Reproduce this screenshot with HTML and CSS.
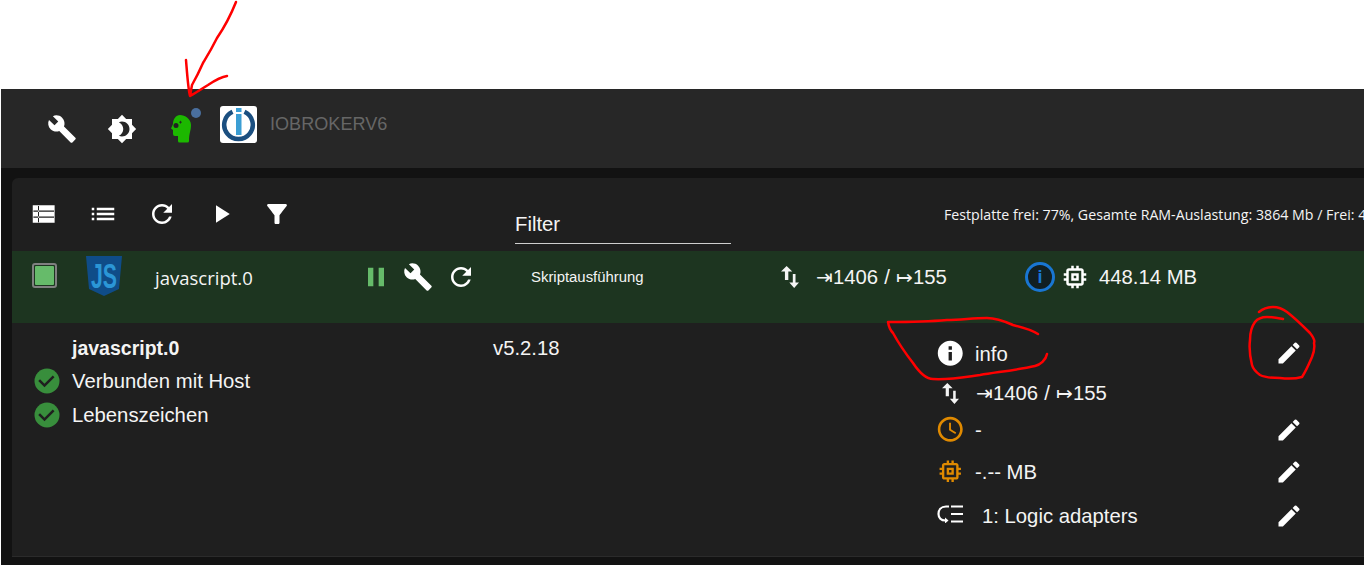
FILE: index.html
```html
<!DOCTYPE html>
<html lang="de">
<head>
<meta charset="utf-8">
<title>ioBroker Instanzen</title>
<link rel="stylesheet" href="styles.css">
</head>
<body>
<svg class="defs" width="0" height="0" aria-hidden="true">
  <symbol id="i-wrench" viewBox="0 0 24 24"><path d="M22.7 19l-9.1-9.1c.9-2.3.4-5-1.5-6.9-2-2-5-2.4-7.4-1.3L9 6 6 9 1.6 4.7C.4 7.1.9 10.1 2.9 12.1c1.9 1.9 4.6 2.4 6.9 1.5l9.1 9.1c.4.4 1 .4 1.4 0l2.3-2.3c.5-.4.5-1.1.1-1.4z"/></symbol>
  <symbol id="i-refresh" viewBox="0 0 24 24"><path d="M17.65 6.35C16.2 4.9 14.21 4 12 4c-4.42 0-7.99 3.58-7.99 8s3.57 8 7.99 8c3.73 0 6.84-2.55 7.73-6h-2.08c-.82 2.33-3.04 4-5.65 4-3.31 0-6-2.69-6-6s2.69-6 6-6c1.66 0 3.14.69 4.22 1.78L13 11h7V4l-2.35 2.35z"/></symbol>
  <symbol id="i-edit" viewBox="0 0 24 24"><path d="M3 17.25V21h3.75L17.81 9.94l-3.75-3.75L3 17.25zM20.71 7.04c.39-.39.39-1.02 0-1.41l-2.34-2.34a.9959.9959 0 0 0-1.41 0l-1.83 1.83 3.75 3.75 1.83-1.83z"/></symbol>
  <symbol id="i-memory" viewBox="0 0 24 24"><path d="M15 9H9v6h6V9zm-2 4h-2v-2h2v2zm8-2V9h-2V7c0-1.1-.9-2-2-2h-2V3h-2v2h-2V3H9v2H7c-1.1 0-2 .9-2 2v2H3v2h2v2H3v2h2v2c0 1.1.9 2 2 2h2v2h2v-2h2v2h2v-2h2c1.1 0 2-.9 2-2v-2h2v-2h-2v-2h2zm-4 6H7V7h10v10z"/></symbol>
  <symbol id="i-check" viewBox="0 0 24 24"><circle cx="12" cy="12" r="10"/><path class="check-mark" d="M16.59 7.58L10 14.17l-3.59-3.58L5 12l5 5 8-8z"/></symbol>
  <symbol id="i-swap" viewBox="0 0 16 22" preserveAspectRatio="none"><path d="M5 0l5 5.5H6.5V14h-3V5.5H0zM10.5 8h2.4v8.6H16L11.7 22 7.4 16.6h3.1z"/></symbol>
</svg>

<div class="page-gap"></div>
<div class="app">
  <header class="header">
    <svg class="ic-30 head-wrench"><use href="#i-wrench"/></svg>
    <svg class="ic-30 head-theme" viewBox="0 0 24 24"><path d="M20 8.69V4h-4.69L12 .69 8.69 4H4v4.69L.69 12 4 15.31V20h4.69L12 23.31 15.31 20H20v-4.69L23.31 12 20 8.69zM12 18c-.89 0-1.74-.2-2.5-.55C11.56 16.5 13 14.42 13 12s-1.44-4.5-3.5-5.45C10.26 6.2 11.11 6 12 6c3.31 0 6 2.69 6 6s-2.69 6-6 6z"/></svg>
    <div class="expert">
      <svg class="expert-head" viewBox="0 0 22 30"><path class="head-fill" d="M10 2C15 2 21 6 21 12c0 6-2 8-2 16q0 1.500-1.500 1.500h-8Q8 29.500 8 28v-5H5q-2 0-2-2v-4L1 15.500 3 11C3 6 6 2 10 2z"/><circle class="head-eye" cx="6" cy="12.500" r="2.500"/><path class="head-eye-line" d="M10.500 7.800v2.800M9.100 9.200h2.800"/></svg>
      <span class="expert-dot"></span>
    </div>
    <svg class="logo" viewBox="0 0 37 37">
      <rect class="logo-bg" width="37" height="37" rx="3"/>
      <path class="logo-ring" d="M12.500 5.800A14.300 14.300 0 1 0 24.500 5.800"/>
      <rect class="logo-bar" x="16" y="2" width="5.500" height="4"/>
      <rect class="logo-bar" x="16" y="8" width="5.500" height="21"/>
    </svg>
    <span class="host-name">IOBROKERV6</span>
  </header>

  <main class="card">
    <div class="toolbar">
      <div class="tools">
        <svg class="ic-30" viewBox="0 0 24 24"><path d="M3 5h17.500v14H3zM3.500 9.200v.9h16.500v-.9zm0 4.800v.9h16.500v-.9zM8 5.500H7.200v13H8z" fill-rule="evenodd"/></svg>
        <svg class="ic-30" viewBox="0 0 24 24"><path d="M3 7h2v2H3zM7 7h14v2H7zM3 11h2v2H3zM7 11h14v2H7zM3 15h2v2H3zM7 15h14v2H7z"/></svg>
        <svg class="ic-30"><use href="#i-refresh"/></svg>
        <svg class="ic-30" viewBox="0 0 24 24"><path d="M8 5v14l11-7z"/></svg>
        <svg class="ic-30 tool-filter" viewBox="0 0 24 24"><path d="M4.250 5.610C6.270 8.200 10 13 10 13v6c0 .550.450 1 1 1h2c.550 0 1-.450 1-1v-6s3.720-4.800 5.740-7.390c.510-.660.040-1.610-.790-1.610H5.040c-.830 0-1.300.950-.790 1.610z"/></svg>
      </div>
      <div class="filter">Filter</div>
      <div class="stats">Festplatte frei: 77%, Gesamte RAM-Auslastung: 3864 Mb / Frei: 4</div>
    </div>

    <div class="instance-row">
      <span class="checkbox"><span class="checkbox-fill"></span></span>
      <svg class="js-logo" viewBox="0 0 36 40">
        <path class="js-shield" d="M0 0h36l-3 33-15 7-15-7z"/>
        <text class="js-text" x="18" y="32" text-anchor="middle" textLength="26" lengthAdjust="spacingAndGlyphs">JS</text>
      </svg>
      <span class="instance-name">javascript.0</span>
      <div class="actions">
        <svg class="ic-pause" viewBox="0 0 24 24"><path d="M6 19h4V5H6v14zm8-14v14h4V5h-4z"/></svg>
        <svg class="ic-30"><use href="#i-wrench"/></svg>
        <svg class="ic-30 action-refresh"><use href="#i-refresh"/></svg>
      </div>
      <span class="title">Skriptausführung</span>
      <div class="events">
        <svg class="ic-swap"><use href="#i-swap"/></svg>
        <span class="event-text">⇥1406 / ↦155</span>
      </div>
      <div class="usage">
        <span class="info-ring">i</span>
        <svg class="ic-memory"><use href="#i-memory"/></svg>
        <span>448.14 MB</span>
      </div>
    </div>

    <div class="details">
      <div class="status">
        <div class="status-name">javascript.0</div>
        <div class="status-line"><svg class="ic-check"><use href="#i-check"/></svg>Verbunden mit Host</div>
        <div class="status-line"><svg class="ic-check"><use href="#i-check"/></svg>Lebenszeichen</div>
      </div>
      <div class="version">v5.2.18</div>
      <div class="props">
        <svg class="ic-prop" viewBox="0 0 24 24"><path d="M12 1.500C6.200 1.500 1.500 6.200 1.500 12S6.200 22.500 12 22.500 22.500 17.800 22.500 12 17.800 1.500 12 1.500zm1.400 16.500h-2.800v-7h2.800v7zm0-9h-2.800V6.200h2.800V9z"/></svg>
        <span class="prop-text prop-info">info</span>
        <svg class="ic-edit"><use href="#i-edit"/></svg>

        <svg class="ic-swap ic-swap-prop"><use href="#i-swap"/></svg>
        <span class="prop-text event-text prop-events">⇥1406 / ↦155</span>
        <span></span>

        <svg class="ic-prop ic-amber" viewBox="0 0 24 24"><path d="M11.990 1.500C6.200 1.500 1.500 6.200 1.500 12s4.700 10.500 10.490 10.500C17.800 22.500 22.500 17.800 22.500 12S17.800 1.500 11.990 1.500zM12 20.300c-4.600 0-8.300-3.700-8.300-8.300S7.400 3.700 12 3.700s8.300 3.700 8.300 8.300-3.700 8.300-8.300 8.300zm.6-13.800H11v6.300l5.250 3.150.75-1.230-4.400-2.620z"/></svg>
        <span class="prop-text">-</span>
        <svg class="ic-edit"><use href="#i-edit"/></svg>

        <svg class="ic-prop ic-amber"><use href="#i-memory"/></svg>
        <span class="prop-text">-.-- MB</span>
        <svg class="ic-edit"><use href="#i-edit"/></svg>

        <svg class="ic-logic" viewBox="0 0 26 18"><path d="M12 1.500H9C4 1.500 1.500 5 1.500 9c0 3.600 2.500 6.500 7 6.500"/><path class="logic-head" d="M8 12.500v6l3.500-3z"/><path d="M14 1.500h12M14 9h12M14 16.500h12"/></svg>
        <span class="prop-text prop-group">1: Logic adapters</span>
        <svg class="ic-edit"><use href="#i-edit"/></svg>
      </div>
    </div>
  </main>
</div>

<svg class="scribbles" viewBox="0 0 1364 565" aria-hidden="true">
  <path d="M236 2C232 12 228 22 217 38C211 50 206 58 203 63C199 72 196 78 192 85L190 96C188 88 187 72 186 60M190 96C197 92 203 88 208 85C214 81 220 77 227 76"/>
  <path d="M1038 334C1030 329 1021 327 1013 325C1004 321 996 318 987 318C972 318 962 320 947 320C925 322 905 322 888 322C889 328 891 331 893 333C899 344 906 354 913 363C919 372 926 379 933 379C950 380 965 377 980 375C998 372 1017 370 1035 366C1040 365 1046 360 1047 354"/>
  <path d="M1259 312C1264 308 1268 307 1273 307C1279 307 1283 309 1287 312C1296 319 1303 326 1310 333C1314 338 1315 341 1314 343C1315 348 1314 352 1312 357C1309 364 1306 371 1302 377C1295 379 1288 379 1280 378C1273 378 1266 378 1260 375C1256 372 1253 369 1252 365C1250 357 1249 348 1250 340C1250 333 1252 326 1255 322C1258 318 1262 317 1267 317C1272 317 1278 318 1283 319"/>
</svg>
</body>
</html>
```

FILE: styles.css
```css
* { box-sizing: border-box; }

html, body {
  margin: 0;
  height: 565px;
  overflow: hidden;
  background: #fff;
}

body {
  position: relative;
  font-family: "Liberation Sans", Arial, sans-serif;
  font-size: 20.300px;
  color: #f4f4f4;
}

svg { fill: currentColor; flex: none; display: block; }
.defs { position: absolute; }

.page-gap { height: 89px; }

.app {
  margin-left: 1px;
  height: 476px;
  background: #121212;
  overflow: hidden;
}

/* header */
.header {
  height: 79px;
  background: #272727;
  display: flex;
  align-items: center;
  padding-left: 46px;
  color: #fff;
}
.ic-30 { width: 30px; height: 30px; color: #fff; }
.head-theme { margin-left: 30px; }
.expert { position: relative; width: 22px; height: 30px; margin-left: 33px; margin-top: -1px; }
.expert-head { width: 22px; height: 30px; }
.head-fill { fill: #1cb800; }
.head-eye { fill: #222; }
.head-eye-line { stroke: #222; stroke-width: 0.800; fill: none; }
.expert-dot {
  position: absolute;
  right: -9px;
  top: -5px;
  width: 10px;
  height: 10px;
  border-radius: 50%;
  background: #4a6f9e;
}
.logo { width: 37px; height: 37px; margin-left: 28px; margin-top: -9px; }
.logo-bg { fill: #fff; }
.logo-ring { fill: none; stroke: #1b4f80; stroke-width: 4.500; }
.logo-bar { fill: #3b9ed4; }
.host-name {
  margin-left: 13px;
  margin-top: -9px;
  font-size: 18.100px;
  color: #666;
}

/* card */
.card {
  margin: 10px 0 0 11px;
  height: 379px;
  background: #1f1f1f;
  border-top-left-radius: 6px;
  border-bottom: 1px solid #2b2b2b;
}

.toolbar {
  height: 73px;
  display: flex;
  position: relative;
}
.tools {
  width: 503px;
  padding: 21px 0 0 16.500px;
  display: flex;
  gap: 29.300px;
  flex: none;
}
.tool-filter { margin-left: -3.500px; }
.filter {
  width: 216px;
  height: 66px;
  padding-top: 34px;
  flex: none;
  line-height: 24px;
  border-bottom: 1px solid #cfcfcf;
}
.stats {
  margin-left: 213px;
  padding-top: 28px;
  font-family: "Open Sans", sans-serif;
  font-size: 14.200px;
  line-height: 18px;
  white-space: nowrap;
}

/* instance row */
.instance-row {
  height: 72px;
  background: #1d3520;
  padding: 0 0 20px 20px;
  display: grid;
  grid-template-columns: 54px 69px 208px 168px 246px 245px 1fr;
  align-items: center;
}
.checkbox {
  width: 25px;
  height: 25px;
  border: 2px solid #808080;
  border-radius: 3px;
  padding: 1px;
  margin-top: -3px;
}
.checkbox-fill {
  display: block;
  height: 100%;
  background: #66bb6a;
  border-radius: 1px;
}
.js-logo { width: 36px; height: 40px; margin-top: -2px; overflow: visible; }
.js-shield { fill: #0f4c88; }
.js-text {
  font-family: "Liberation Sans", sans-serif;
  font-weight: 700;
  font-size: 35px;
  fill: #2b96d6;
}
.instance-name {
  font-family: "Open Sans", sans-serif;
  font-size: 18.500px;
  margin-top: 1px;
}
.actions { display: flex; align-items: center; }
.ic-pause { width: 32px; height: 32px; color: #66bb6a; margin: 0 11px 0 -3px; }
.action-refresh { margin-left: 13px; }
.title { font-size: 14.900px; }
.events { display: flex; align-items: center; gap: 17px; padding-left: 4px; }
.event-text { word-spacing: 0.500px; }
.ic-swap { width: 18px; height: 22px; }
.usage { display: flex; align-items: center; padding-left: 3px; }
.info-ring {
  width: 30px;
  height: 30px;
  border: 3px solid #1976d2;
  border-radius: 50%;
  background: #111f22;
  color: #1976d2;
  font-weight: 700;
  font-size: 18px;
  line-height: 24px;
  text-align: center;
}
.ic-memory { width: 30px; height: 30px; margin: 0 9px 0 5px; color: #fff; }

/* details */
.details {
  height: 234px;
  display: flex;
  position: relative;
  align-items: flex-start;
}
.status { width: 481px; padding: 13px 0 0 60px; flex: none; }
.status-name { font-weight: 700; font-size: 19.500px; line-height: 24px; margin-bottom: 4px; }
.status-line { display: flex; align-items: center; height: 34px; line-height: 34px; position: relative; }
.ic-check {
  position: absolute;
  left: -40px;
  width: 30px;
  height: 30px;
  color: #388e3c;
}
.check-mark { fill: #1f1f1f; }
.version { width: 438px; padding-top: 13px; line-height: 24px; flex: none; }
.props {
  padding-top: 10px;
  display: grid;
  grid-template-columns: 44px 300px 28px;
  grid-template-rows: 40px 40px 34px 50px 38px;
  align-items: center;
}
.ic-prop { width: 28.500px; height: 28.500px; margin-left: 4.750px; color: #fff; }
.ic-amber { color: #e08a00; margin-top: -1px; }
.ic-swap-prop { width: 17px; height: 21px; margin-left: 11px; }
.ic-logic {
  width: 26px;
  height: 18px;
  margin: -4px 0 0 6px;
  fill: none;
  stroke: #fff;
  stroke-width: 2.200;
}
.logic-head { fill: #fff; stroke: none; }
.prop-info { padding-top: 2px; }
.prop-events { padding-left: 1px; }
.prop-group { padding-left: 7px; }
.ic-edit { width: 28px; height: 28px; color: #fff; }

/* hand-drawn annotations over the page */
.scribbles {
  position: absolute;
  inset: 0;
  width: 1364px;
  height: 565px;
  fill: none;
  stroke: #f00;
  stroke-width: 2.500;
  stroke-linecap: round;
  stroke-linejoin: round;
  pointer-events: none;
}
```
